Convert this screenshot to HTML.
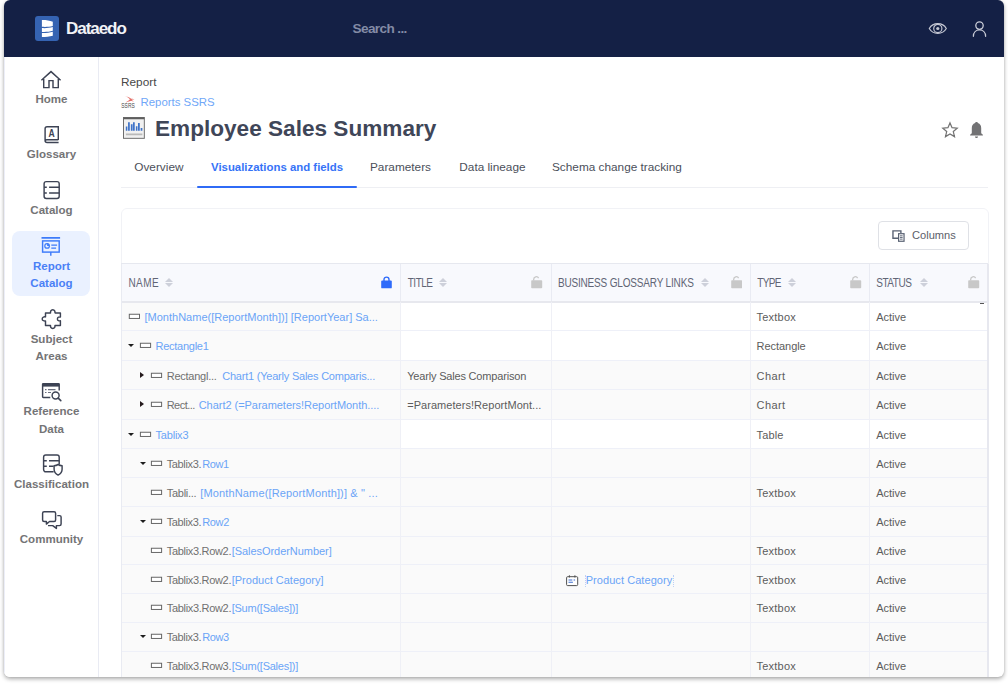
<!DOCTYPE html>
<html lang="en">
<head>
<meta charset="utf-8">
<title>Employee Sales Summary - Dataedo</title>
<style>
*{box-sizing:border-box;margin:0;padding:0}
html,body{width:1008px;height:685px;overflow:hidden;background:#fff}
body{font-family:"Liberation Sans",Arial,sans-serif;color:#444;position:relative}
.win{position:absolute;left:4px;top:0;width:1000px;height:677px;border-radius:6px;overflow:hidden;background:#fff;
 box-shadow:0 2px 4px rgba(0,0,0,.33),0 0 2px rgba(0,0,0,.09)}
.pg{position:absolute;left:-4px;top:0;width:1008px;height:685px}
.pg *{position:absolute}
.pg svg *{position:static}
span{position:static!important}
span.ab{position:absolute!important}

/* top bar */
.top{left:0;top:0;width:1008px;height:57px;background:#142045}
.logo{left:34.5px;top:16px;width:24.5px;height:25px;border-radius:3px;background:#3563b2}
.brand{left:66px;top:17px;font-size:17px;line-height:23px;font-weight:bold;color:#f1f2f6;letter-spacing:-1.05px;white-space:nowrap}
.search{left:352.5px;top:18.5px;font-size:13.6px;line-height:20px;font-weight:bold;color:#838ba6;white-space:nowrap;letter-spacing:-.62px}

/* sidebar */
.side{left:4px;top:57px;width:95px;height:620px;background:#fff;border-right:1px solid #e9ebf3;border-left:1px solid #eceef8}
.sl{left:4px;width:95px;text-align:center;font-size:11.55px;line-height:17px;font-weight:bold;color:#747476;white-space:nowrap}
.tile{left:12.100px;top:231px;width:78px;height:65px;border-radius:8px;background:#eaf1ff}
.sl.act{color:#4a80f6}

/* heading */
.kind{left:121px;top:73.500px;font-size:11.8px;line-height:16px;color:#484848;white-space:nowrap}
.src{left:140.500px;top:94px;font-size:11.4px;line-height:16px;color:#70a7f8;white-space:nowrap}
.title{left:155px;top:114px;font-size:22.6px;line-height:30px;font-weight:bold;color:#3f4658;white-space:nowrap}
.tab{top:158px;font-size:11.8px;line-height:18px;color:#4b4f5a;white-space:nowrap}
.tab.on{color:#3673f7;font-weight:bold;font-size:11.4px}
.tabline{left:121px;top:186.5px;width:867px;height:1px;background:#eeeff3}
.tabbar{left:197px;top:185.5px;width:159.5px;height:2px;background:#2f6bf6;border-radius:1px}

/* card + table */
.card{left:120.5px;top:208px;width:868px;height:480px;border:1px solid #f1f2f6;border-radius:6px;background:#fff}
.btn{left:877.500px;top:221px;width:91.500px;height:28.500px;border:1px solid #dfe1e6;border-radius:4px;background:#fff}
.btn b{left:33.5px;top:6px;font-weight:normal;font-size:11.1px;line-height:14px;color:#5c6069;white-space:nowrap}
.th{left:121px;top:263px;width:867px;height:40px;background:#f8f9fd;border-top:1px solid #e6e8ef;border-bottom:2px solid #e7e8ee}
.hv{top:264px;width:1px;height:37px;background:#e9ebf3}
.hl{top:276.500px;font-weight:normal;font-size:10px;line-height:14px;color:#616575;white-space:nowrap;transform:scaleY(1.25);transform-origin:0 70%}
.so{top:278px;width:8px;height:9px}
.lock{top:276px}
.row{left:121px;width:867px;height:29.15px;border-bottom:1px solid #eef0f8;background:#fff;font-size:11px;line-height:31px;color:#505050;white-space:nowrap}
.row.g{background:#fafafa}
.row:before{content:"";position:absolute;left:0;top:0;width:279px;height:100%;background:#fafafa}
.row span{top:0}
.lk{color:#6aa4f7}
.gy{color:#707070}
.tx{color:#5c5c5c}
.rc{}
.cd{width:0;height:0;border-left:3px solid transparent;border-right:3px solid transparent;border-top:3.700px solid #1e1e1e;display:block}
.cr{width:0;height:0;border-top:3.300px solid transparent;border-bottom:3.300px solid transparent;border-left:4px solid #241a1c;display:block}
.gi{left:444.900px;top:9.900px}
.fo{display:block;left:464px;top:10px;width:88.500px;height:12px;border-left:1px dotted #bcd0f5;border-right:1px dotted #bcd0f5}
.bv{top:302px;width:1px;height:380px;background:#eff0f6;z-index:2}
.vb{left:987.300px;top:263.500px;width:1.800px;height:420px;background:#e7e8ef;z-index:3}
.vl{left:120.5px;top:263.5px;width:1px;height:420px;background:#e9ebf2}
</style>
</head>
<body>
<div class="win"><div class="pg">

<!-- ============ TOP BAR ============ -->
<div class="top"></div>
<div class="logo"><svg width="24.5" height="25" viewBox="0 0 24.5 25"><path d="M6.9 4.1c3.6-.1 7.6.4 10.9 1.6v4.3c-3.2.9-7.4 1-10.9.8z" fill="#fff"/><path d="M6.9 12.1c3.8.2 7.700-.1 10.900-1v3.700c-3.200 1-7.200 1.300-10.900 1.100z" fill="#fff"/><path d="M6.900 17.100c3.800.1 7.700-.3 10.900-1.300v4c-3.200.9-7.200 1.300-10.900 1.300z" fill="#fff"/></svg></div>
<div class="brand">Dataedo</div>
<div class="search">Search ...</div>
<svg style="left:928px;top:21px" width="20" height="15" viewBox="0 0 20 15"><path d="M1.300 7.500C3.200 4.200 6.300 2.700 9.800 2.700s6.600 1.500 8.500 4.800c-1.900 3.300-5 4.800-8.500 4.800S3.200 10.800 1.300 7.500z" fill="none" stroke="#c3c6d2" stroke-width="1.200"/><circle cx="9.800" cy="7.500" r="4.100" fill="none" stroke="#c3c6d2" stroke-width="1.200"/><circle cx="9.800" cy="7.500" r="1.600" fill="#c3c6d2"/></svg>
<svg style="left:971px;top:20px" width="17" height="18" viewBox="0 0 17 18"><circle cx="8.500" cy="5.600" r="3.700" fill="none" stroke="#c8cbd6" stroke-width="1.300"/><path d="M2.400 16.300c0-3.900 2.700-6.400 6.100-6.400s6.100 2.500 6.100 6.400" fill="none" stroke="#c8cbd6" stroke-width="1.300" stroke-linecap="round"/></svg>

<!-- ============ SIDEBAR ============ -->
<div class="side"></div>
<div class="tile"></div>

<!-- home -->
<svg style="left:39.200px;top:67.800px" width="24" height="24" viewBox="0 0 24 24"><path d="M2.400 12.300L12 3.600l9.600 8.700M4.700 11v8.600h5.300v-7h4v7h5.300V11" fill="none" stroke="#3d4354" stroke-width="1.450" stroke-linejoin="miter"/></svg>
<div class="sl" style="top:91px">Home</div>
<!-- glossary -->
<svg style="left:40px;top:123px" width="24" height="24" viewBox="0 0 24 24"><path d="M18.300 17.100V3.800H7.100c-1.100 0-2 .9-2 2v11.700c0 1.100.9 2 2 2h11.500M5.100 17.500c0-.5.600-.7 2-.7h11.200" fill="none" stroke="#3d4354" stroke-width="1.450"/><text x="11.600" y="14.300" font-family="Liberation Sans, Arial, sans-serif" font-weight="bold" font-size="11.500" text-anchor="middle" fill="#3d4354" textLength="6.200" lengthAdjust="spacingAndGlyphs">A</text></svg>
<div class="sl" style="top:146px">Glossary</div>
<!-- catalog -->
<svg style="left:40px;top:178px" width="24" height="24" viewBox="0 0 24 24"><rect x="4.100" y="3.600" width="15.100" height="16.800" rx="2.200" fill="none" stroke="#3d4354" stroke-width="1.450"/><path d="M4.100 9.200h2.700M9.100 9.200h10.100M4.100 15h2.700M9.100 15h10.100" stroke="#3d4354" stroke-width="1.450"/></svg>
<div class="sl" style="top:202px">Catalog</div>
<!-- report catalog -->
<svg style="left:39px;top:234px" width="24" height="24" viewBox="0 0 24 24"><path d="M2.500 3.900h18.600" stroke="#3d7bfa" stroke-width="1.650"/><rect x="3.600" y="6.900" width="16.600" height="11.200" fill="none" stroke="#3d7bfa" stroke-width="1.450"/><path d="M11.800 18.100v3.600" stroke="#3d7bfa" stroke-width="1.450"/><circle cx="8.100" cy="11.900" r="2.300" fill="none" stroke="#3d7bfa" stroke-width="1.200"/><path d="M8.100 11.900V9.600a2.300 2.300 0 0 1 2.300 2.300z" fill="#3d7bfa"/><path d="M12.300 11.200h5.800M12.300 14.100h4.800" stroke="#3d7bfa" stroke-width="1.300"/></svg>
<div class="sl act" style="top:258px">Report</div>
<div class="sl act" style="top:274.5px">Catalog</div>
<!-- subject areas -->
<svg style="left:40px;top:307px" width="24" height="24" viewBox="0 0 24 24"><path d="M5.500 5.900h5c-.1-1.100.2-3.200 2.250-3.200s2.350 2.100 2.250 3.200h5.400v4.100c-1.200-.2-3 .1-3 1.900s1.800 2.100 3 1.900v4.700h-5.400c.1 1.100-.2 2.900-2.250 2.900s-2.350-1.800-2.250-2.900h-5v-4.600c-1.300.2-3.300-.1-3.300-2s2-2.200 3.300-2z" fill="none" stroke="#3d4354" stroke-width="1.450" stroke-linejoin="round"/></svg>
<div class="sl" style="top:330.500px">Subject</div>
<div class="sl" style="top:347.500px">Areas</div>
<!-- reference data -->
<svg style="left:40px;top:380px" width="24" height="24" viewBox="0 0 24 24"><path d="M2.600 3.600h16.600v3H2.600z" fill="#3d4354"/><path d="M10.300 17.500H3.300c-.4 0-.7-.3-.7-.7V4.300c0-.4.300-.7.700-.7h15.200c.4 0 .700.300.700.700v6.300" fill="none" stroke="#3d4354" stroke-width="1.450"/><path d="M5 9.600h1.500M5 12.500h1.500" stroke="#6b7080" stroke-width="1.200"/><path d="M8 9.600h7.500M8 12.500h3" stroke="#6b7080" stroke-width="1.200"/><circle cx="15.600" cy="15.400" r="3.500" fill="none" stroke="#3d4354" stroke-width="1.450"/><path d="M18.200 18.100l2.600 2.500" stroke="#3d4354" stroke-width="1.600" stroke-linecap="round"/></svg>
<div class="sl" style="top:402.500px">Reference</div>
<div class="sl" style="top:420.500px">Data</div>
<!-- classification -->
<svg style="left:40px;top:452px" width="24" height="24" viewBox="0 0 24 24"><path d="M13.600 19.800H5.800c-1.200 0-2.200-1-2.200-2.200V5.200c0-1.200 1-2.200 2.200-2.200h11.200c1.200 0 2.200 1 2.200 2.200v7" fill="none" stroke="#3d4354" stroke-width="1.450"/><path d="M3.600 8.700h3.200M9 8.700h10.200M3.600 14.300h3.200M9 14.300h4.600" stroke="#3d4354" stroke-width="1.450"/><path d="M18.100 12.500c1.200.7 2.700 1.100 4 1.200v3.600c0 2.700-1.800 4.700-4 5.800-2.200-1.100-4-3.100-4-5.800v-3.600c1.300-.1 2.800-.5 4-1.200z" fill="#fff" stroke="#3d4354" stroke-width="1.450" stroke-linejoin="round"/></svg>
<div class="sl" style="top:475.500px">Classification</div>
<!-- community -->
<svg style="left:40px;top:508px" width="24" height="24" viewBox="0 0 24 24"><path d="M4.100 3.800h10c.800 0 1.500.700 1.500 1.500v6.700c0 .800-.700 1.500-1.500 1.500H9.500l-3.100 2.600v-2.600H4.100c-.800 0-1.500-.700-1.500-1.500V5.300c0-.800.700-1.500 1.500-1.500z" fill="none" stroke="#3d4354" stroke-width="1.450" stroke-linejoin="round"/><path d="M17.300 7.600h2.300c.800 0 1.500.700 1.500 1.500v7c0 .800-.700 1.500-1.500 1.500h-3.200v2.800l-3.700-2.800H8" fill="none" stroke="#3d4354" stroke-width="1.450" stroke-linejoin="round"/></svg>
<div class="sl" style="top:530.500px">Community</div>

<!-- ============ HEADING ============ -->
<div class="kind">Report</div>
<svg style="left:120px;top:94px" width="17" height="15" viewBox="0 0 17 15"><path d="M4.600 2.100c2.400.4 4.800 1.300 6.600 2.700 1.400-.3 2.600.1 3.300.9-1.100-.3-2.100-.2-3 .3 1 .3 1.800.9 2.300 1.700-1-.6-2.100-.8-3.200-.6-1.700.6-3.500 1.200-5.300 1.400 1.900-.8 3.500-1.900 4.600-3.200-1.300-1.500-3.200-2.500-5.300-3.200z" fill="#e0574f" opacity=".85"/><text x="1.300" y="13.800" font-family="Liberation Sans, Arial, sans-serif" font-size="6.800" fill="#4a4a4a" textLength="13.500" lengthAdjust="spacingAndGlyphs">SSRS</text></svg>
<div class="src">Reports SSRS</div>
<svg style="left:123px;top:116.600px" width="22.300" height="22.300" viewBox="0 0 23 23"><rect x=".5" y=".5" width="21.500" height="21.500" fill="#f1f1f1" stroke="#6a6a6a"/><path d="M.5.500h21.500v1.800H.5z" fill="#5e5e5e"/><path d="M2.900 9.800h1.600v4.500H2.900zM5.200 5.300h1.800v9H5.200zM8.100 7.600h1.800v6.700H8.100zM10.300 5.300h1.800v9h-1.800zM13.300 9.500h1.600v4.800h-1.600zM15.500 6.200h1.800v8.100h-1.800zM18.200 11.300H20v3h-1.800z" fill="#3f73c8"/><path d="M3 17.900h17" stroke="#b9b9b9" stroke-width="1.600"/></svg>
<div class="title">Employee Sales Summary</div>
<!-- star / bell -->
<svg style="left:940.500px;top:121px" width="18" height="18" viewBox="0 0 18 18"><path d="M9 1.900l2.050 4.800 5.150.45-3.900 3.400 1.200 5.050L9 12.900l-4.500 2.700 1.200-5.050-3.900-3.400 5.150-.45z" fill="none" stroke="#737373" stroke-width="1.250" stroke-linejoin="miter"/></svg>
<svg style="left:969px;top:121px" width="15" height="18" viewBox="0 0 15 18"><path d="M6.400 1h2.200v1.100c2.200.5 3.600 2.400 3.600 4.800v5.400l1.700 1.400v.8H1.100v-.8l1.700-1.400V6.900c0-2.400 1.400-4.300 3.600-4.800z" fill="#727274"/><path d="M5.900 15.400h3.200c0 .9-.7 1.500-1.600 1.500s-1.600-.6-1.600-1.500z" fill="#727274"/></svg>

<!-- tabs -->
<div class="tab" style="left:134.300px">Overview</div>
<div class="tab on" style="left:211px">Visualizations and fields</div>
<div class="tab" style="left:370px">Parameters</div>
<div class="tab" style="left:459.300px">Data lineage</div>
<div class="tab" style="left:552px">Schema change tracking</div>
<div class="tabline"></div>
<div class="tabbar"></div>

<!-- ============ CARD / TABLE ============ -->
<div class="card"></div>
<div class="btn"><svg style="left:13.700px;top:8px" width="13" height="12" viewBox="0 0 14 13"><path d="M9.600 3.300V1H1v8h5.700" fill="none" stroke="#596273" stroke-width="1.500"/><rect x="7.100" y="4" width="5.900" height="8.200" fill="#fff" stroke="#596273" stroke-width="1.300"/><path d="M8.600 6.300h2.900M8.600 8.100h2.900M8.600 9.900h2.900" stroke="#596273" stroke-width="1"/></svg><b>Columns</b></div>

<div class="th"></div>
<div class="hv" style="left:400px"></div>
<div class="hv" style="left:551px"></div>
<div class="hv" style="left:750px"></div>
<div class="hv" style="left:869px"></div>
<div class="hl" style="left:128.5px;letter-spacing:0.40px">NAME</div>
<svg class="so" style="left:165.4px" viewBox="0 0 8 9"><path d="M4 0l4 3.900H0zM4 9L0 5.100h8z" fill="#cdd0da"/></svg>
<svg class="lock" style="left:381.2px" width="11" height="12.500" viewBox="0 0 11 12.500"><path d="M3 5.200V3.600a2.500 2.500 0 0 1 5 0v1.600" fill="none" stroke="#2f6bfa" stroke-width="1.400"/><rect x=".200" y="4.500" width="10.600" height="7.800" rx=".900" fill="#2f6bfa"/></svg>
<div class="hl" style="left:407.7px;letter-spacing:-0.47px">TITLE</div>
<svg class="so" style="left:439.4px" viewBox="0 0 8 9"><path d="M4 0l4 3.900H0zM4 9L0 5.100h8z" fill="#cdd0da"/></svg>
<svg class="lock" style="left:531.2px" width="11.500" height="12.500" viewBox="0 0 11.500 12.500"><path d="M2.700 4.600V3.300a2.600 2.600 0 0 1 4.900-1.200" fill="none" stroke="#c8c8c8" stroke-width="1.300"/><rect x=".200" y="4.200" width="11" height="8" rx=".800" fill="#c8c8c8"/></svg>
<div class="hl" style="left:557.9px;letter-spacing:-0.17px">BUSINESS GLOSSARY LINKS</div>
<svg class="so" style="left:700.6px" viewBox="0 0 8 9"><path d="M4 0l4 3.900H0zM4 9L0 5.100h8z" fill="#cdd0da"/></svg>
<svg class="lock" style="left:730.8px" width="11.500" height="12.500" viewBox="0 0 11.500 12.500"><path d="M2.700 4.600V3.300a2.600 2.600 0 0 1 4.900-1.200" fill="none" stroke="#c8c8c8" stroke-width="1.300"/><rect x=".200" y="4.200" width="11" height="8" rx=".800" fill="#c8c8c8"/></svg>
<div class="hl" style="left:757.3px;letter-spacing:-0.66px">TYPE</div>
<svg class="so" style="left:787.6px" viewBox="0 0 8 9"><path d="M4 0l4 3.900H0zM4 9L0 5.100h8z" fill="#cdd0da"/></svg>
<svg class="lock" style="left:850.4px" width="11.500" height="12.500" viewBox="0 0 11.500 12.500"><path d="M2.700 4.600V3.300a2.600 2.600 0 0 1 4.900-1.200" fill="none" stroke="#c8c8c8" stroke-width="1.300"/><rect x=".200" y="4.200" width="11" height="8" rx=".800" fill="#c8c8c8"/></svg>
<div class="hl" style="left:876.2px;letter-spacing:-0.47px">STATUS</div>
<svg class="so" style="left:919.7px" viewBox="0 0 8 9"><path d="M4 0l4 3.900H0zM4 9L0 5.100h8z" fill="#cdd0da"/></svg>
<svg class="lock" style="left:968.3px" width="11.500" height="12.500" viewBox="0 0 11.500 12.500"><path d="M2.700 4.600V3.300a2.600 2.600 0 0 1 4.900-1.200" fill="none" stroke="#c8c8c8" stroke-width="1.300"/><rect x=".200" y="4.200" width="11" height="8" rx=".800" fill="#c8c8c8"/></svg>
<div class="bv" style="left:400px"></div>
<div class="bv" style="left:551px"></div>
<div class="bv" style="left:750px"></div>
<div class="bv" style="left:869px"></div>

<div class="row" style="top:303px;height:28px;line-height:29px">
<svg class="rc" style="left:7px;top:10px" width="13" height="8" viewBox="0 0 13 8"><rect x="1.30" y="1.25" width="10.200" height="4.200" fill="#fff" stroke="#666" stroke-width="1"/></svg>
<span class="lk ab" style="left:23.5px;letter-spacing:0.006px">[MonthName([ReportMonth])] [ReportYear] Sa...</span>
<span class="tx ab" style="left:635.6px;letter-spacing:0.199px">Textbox</span>
<span class="tx ab" style="left:755.2px;letter-spacing:0.007px">Active</span>
</div>
<div class="row" style="top:331px;height:30px;line-height:31px">
<i class="cd" style="left:7px;top:12.5px"></i>
<svg class="rc" style="left:18px;top:11px" width="13" height="8" viewBox="0 0 13 8"><rect x="1.40" y="1.25" width="10.200" height="4.200" fill="#fff" stroke="#666" stroke-width="1"/></svg>
<span class="lk ab" style="left:34.6px;letter-spacing:-0.275px">Rectangle1</span>
<span class="tx ab" style="left:635.6px;letter-spacing:-0.048px">Rectangle</span>
<span class="tx ab" style="left:755.2px;letter-spacing:0.007px">Active</span>
</div>
<div class="row g" style="top:361px;height:29px;line-height:31px">
<i class="cr" style="left:19.0px;top:11.4px"></i>
<svg class="rc" style="left:29px;top:11px" width="13" height="8" viewBox="0 0 13 8"><rect x="1.40" y="1.25" width="10.200" height="4.200" fill="#fff" stroke="#666" stroke-width="1"/></svg>
<span class="gy ab" style="left:45.7px;letter-spacing:-0.244px">Rectangl...</span>
<span class="lk ab" style="left:101.2px;letter-spacing:-0.218px">Chart1 (Yearly Sales Comparis...</span>
<span class="tx ab" style="left:286.2px;letter-spacing:-0.183px">Yearly Sales Comparison</span>
<span class="tx ab" style="left:635.6px;letter-spacing:0.400px">Chart</span>
<span class="tx ab" style="left:755.2px;letter-spacing:0.007px">Active</span>
</div>
<div class="row g" style="top:390px;height:30px;line-height:31px">
<i class="cr" style="left:19.0px;top:11.4px"></i>
<svg class="rc" style="left:29px;top:11px" width="13" height="8" viewBox="0 0 13 8"><rect x="1.40" y="1.25" width="10.200" height="4.200" fill="#fff" stroke="#666" stroke-width="1"/></svg>
<span class="gy ab" style="left:45.7px;letter-spacing:-0.512px">Rect...</span>
<span class="lk ab" style="left:77.7px;letter-spacing:-0.034px">Chart2 (=Parameters!ReportMonth....</span>
<span class="tx ab" style="left:286.2px;letter-spacing:0.049px">=Parameters!ReportMont...</span>
<span class="tx ab" style="left:635.6px;letter-spacing:0.400px">Chart</span>
<span class="tx ab" style="left:755.2px;letter-spacing:0.007px">Active</span>
</div>
<div class="row" style="top:420px;height:29px;line-height:31px">
<i class="cd" style="left:7px;top:12.5px"></i>
<svg class="rc" style="left:18px;top:11px" width="13" height="8" viewBox="0 0 13 8"><rect x="1.40" y="1.25" width="10.200" height="4.200" fill="#fff" stroke="#666" stroke-width="1"/></svg>
<span class="lk ab" style="left:34.6px;letter-spacing:-0.220px">Tablix3</span>
<span class="tx ab" style="left:635.6px;letter-spacing:0.120px">Table</span>
<span class="tx ab" style="left:755.2px;letter-spacing:0.007px">Active</span>
</div>
<div class="row g" style="top:449px;height:29px;line-height:31px">
<i class="cd" style="left:18.599999999999994px;top:12.5px"></i>
<svg class="rc" style="left:29px;top:11px" width="13" height="8" viewBox="0 0 13 8"><rect x="1.40" y="1.25" width="10.200" height="4.200" fill="#fff" stroke="#666" stroke-width="1"/></svg>
<span class="gy ab" style="left:45.7px;letter-spacing:-0.362px">Tablix3.</span>
<span class="lk ab" style="left:81.2px;letter-spacing:-0.431px">Row1</span>
<span class="tx ab" style="left:755.2px;letter-spacing:0.007px">Active</span>
</div>
<div class="row g" style="top:478px;height:29px;line-height:31px">
<svg class="rc" style="left:29px;top:11px" width="13" height="8" viewBox="0 0 13 8"><rect x="1.40" y="1.25" width="10.200" height="4.200" fill="#fff" stroke="#666" stroke-width="1"/></svg>
<span class="gy ab" style="left:45.7px;letter-spacing:-0.261px">Tabli...</span>
<span class="lk ab" style="left:79.2px;letter-spacing:0.149px">[MonthName([ReportMonth])] &amp; " ...</span>
<span class="tx ab" style="left:635.6px;letter-spacing:0.199px">Textbox</span>
<span class="tx ab" style="left:755.2px;letter-spacing:0.007px">Active</span>
</div>
<div class="row g" style="top:507px;height:30px;line-height:31px">
<i class="cd" style="left:18.599999999999994px;top:12.5px"></i>
<svg class="rc" style="left:29px;top:11px" width="13" height="8" viewBox="0 0 13 8"><rect x="1.40" y="1.25" width="10.200" height="4.200" fill="#fff" stroke="#666" stroke-width="1"/></svg>
<span class="gy ab" style="left:45.7px;letter-spacing:-0.362px">Tablix3.</span>
<span class="lk ab" style="left:81.2px;letter-spacing:-0.331px">Row2</span>
<span class="tx ab" style="left:755.2px;letter-spacing:0.007px">Active</span>
</div>
<div class="row g" style="top:537px;height:28px;line-height:29px">
<svg class="rc" style="left:29px;top:10px" width="13" height="8" viewBox="0 0 13 8"><rect x="1.40" y="1.25" width="10.200" height="4.200" fill="#fff" stroke="#666" stroke-width="1"/></svg>
<span class="gy ab" style="left:45.7px;letter-spacing:-0.306px">Tablix3.Row2.</span>
<span class="lk ab" style="left:110.7px;letter-spacing:-0.048px">[SalesOrderNumber]</span>
<span class="tx ab" style="left:635.6px;letter-spacing:0.199px">Textbox</span>
<span class="tx ab" style="left:755.2px;letter-spacing:0.007px">Active</span>
</div>
<div class="row g" style="top:565px;height:29px;line-height:31px">
<svg class="rc" style="left:29px;top:11px" width="13" height="8" viewBox="0 0 13 8"><rect x="1.40" y="1.25" width="10.200" height="4.200" fill="#fff" stroke="#666" stroke-width="1"/></svg>
<span class="gy ab" style="left:45.7px;letter-spacing:-0.306px">Tablix3.Row2.</span>
<span class="lk ab" style="left:110.7px;letter-spacing:0.005px">[Product Category]</span>
<svg class="gi" style="top:9.9px" width="13" height="12" viewBox="0 0 13 12"><rect x="0.600" y="1.700" width="11.100" height="8.900" rx="1" fill="#fff" stroke="#505050" stroke-width="1"/><path d="M3.400 0.300v2.200M8.900 0.300v2.200" stroke="#505050" stroke-width="1"/><path d="M2.500 4.900h3.800M7.600 4.900h1.500M2.500 7.200h4.400" stroke="#3f6fd0" stroke-width="1.050"/></svg>
<i class="fo" style="top:10px"></i>
<span class="lk gl ab" style="left:464.7px;letter-spacing:0.062px">Product Category</span>
<span class="tx ab" style="left:635.6px;letter-spacing:0.199px">Textbox</span>
<span class="tx ab" style="left:755.2px;letter-spacing:0.007px">Active</span>
</div>
<div class="row g" style="top:594px;height:29px;line-height:29px">
<svg class="rc" style="left:29px;top:10px" width="13" height="8" viewBox="0 0 13 8"><rect x="1.40" y="1.25" width="10.200" height="4.200" fill="#fff" stroke="#666" stroke-width="1"/></svg>
<span class="gy ab" style="left:45.7px;letter-spacing:-0.306px">Tablix3.Row2.</span>
<span class="lk ab" style="left:110.7px;letter-spacing:-0.242px">[Sum([Sales])]</span>
<span class="tx ab" style="left:635.6px;letter-spacing:0.199px">Textbox</span>
<span class="tx ab" style="left:755.2px;letter-spacing:0.007px">Active</span>
</div>
<div class="row g" style="top:623px;height:29px;line-height:29px">
<i class="cd" style="left:18.599999999999994px;top:11.5px"></i>
<svg class="rc" style="left:29px;top:10px" width="13" height="8" viewBox="0 0 13 8"><rect x="1.40" y="1.25" width="10.200" height="4.200" fill="#fff" stroke="#666" stroke-width="1"/></svg>
<span class="gy ab" style="left:45.7px;letter-spacing:-0.362px">Tablix3.</span>
<span class="lk ab" style="left:81.2px;letter-spacing:-0.381px">Row3</span>
<span class="tx ab" style="left:755.2px;letter-spacing:0.007px">Active</span>
</div>
<div class="row g" style="top:652px;height:29px;line-height:29px">
<svg class="rc" style="left:29px;top:10px" width="13" height="8" viewBox="0 0 13 8"><rect x="1.40" y="1.25" width="10.200" height="4.200" fill="#fff" stroke="#666" stroke-width="1"/></svg>
<span class="gy ab" style="left:45.7px;letter-spacing:-0.306px">Tablix3.Row3.</span>
<span class="lk ab" style="left:110.7px;letter-spacing:-0.242px">[Sum([Sales])]</span>
<span class="tx ab" style="left:635.6px;letter-spacing:0.199px">Textbox</span>
<span class="tx ab" style="left:755.2px;letter-spacing:0.007px">Active</span>
</div>

<div class="vb"></div>
<div class="vl"></div>
<div style="left:980px;top:303px;width:4px;height:1px;background:#555"></div>

</div></div>
</body>
</html>
